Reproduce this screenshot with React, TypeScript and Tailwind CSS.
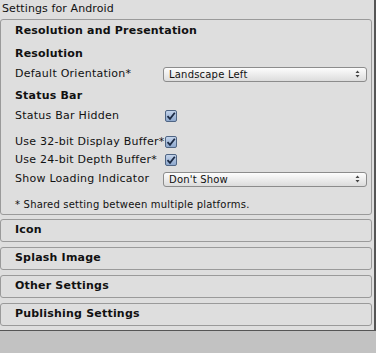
import React from 'react';

const font = { fontFamily: '"DejaVu Sans", Verdana, sans-serif' };

function Checkbox() {
  return (
    <span className="relative z-10 flex h-[12px] w-[12px] items-center justify-center rounded-[2px] border border-[#4f6584] bg-gradient-to-b from-[#c3d3ea] to-[#8ea8cd]">
      <svg width="10" height="10" viewBox="0 0 10 10">
        <path d="M1.5 5.2 L4 7.8 L8.8 1.8" fill="none" stroke="#1b2a44" strokeWidth="1.8" />
      </svg>
    </span>
  );
}

function Popup({ value }: { value: string }) {
  return (
    <div className="flex h-[15px] w-[204px] items-center justify-between rounded-[3px] border border-[#8c8c8c] bg-gradient-to-b from-[#fdfdfd] to-[#dcdcdc] pl-[5px] pr-[6px] text-[10px] tracking-[0.2px] text-[#111]">
      <span>{value}</span>
      <svg width="5" height="8" viewBox="0 0 5 8">
        <path d="M2.5 0.5 L4.5 3 L0.5 3 Z M2.5 7.5 L4.5 5 L0.5 5 Z" fill="#444" />
      </svg>
    </div>
  );
}

function Row({ label, children, className = '' }: { label: string; children?: React.ReactNode; className?: string }) {
  return (
    <div className={`flex h-[18px] items-center ${className}`}>
      <span className="w-[148px] shrink-0 whitespace-nowrap tracking-[0.25px]">{label}</span>
      {children}
    </div>
  );
}

function Foldout({ title }: { title: string }) {
  return (
    <div className="mt-[5px] flex h-[23px] items-center rounded-[3px] border border-[#9a9a9a] pl-[14px] font-bold tracking-[0.2px] first:mt-[4px]">
      {title}
    </div>
  );
}

export default function App() {
  return (
    <div className="h-[353px] w-[376px] overflow-hidden bg-[#c2c2c2] text-[11px] text-[#111]" style={font}>
      <div className="h-[331px] border-b border-r-2 border-[#555] bg-[#dedede] pr-[2px]">
        <div className="flex h-[19px] items-center pl-[2px] text-[11px] tracking-[0.1px]">Settings for Android</div>

        {/* Resolution and Presentation */}
        <div className="h-[196px] rounded-[3px] border border-[#9a9a9a] pl-[14px]">
          <div className="flex h-[23px] items-center font-bold tracking-[0.2px]">Resolution and Presentation</div>
          <div className="mt-[2px] flex h-[18px] items-center font-bold tracking-[0.2px]">Resolution</div>
          <Row label="Default Orientation*" className="mt-[2px]">
            <Popup value="Landscape Left" />
          </Row>
          <div className="mt-[4px] flex h-[18px] items-center font-bold tracking-[0.2px]">Status Bar</div>
          <Row label="Status Bar Hidden" className="mt-[2px]">
            <span className="ml-[2px]"><Checkbox /></span>
          </Row>
          <Row label="Use 32-bit Display Buffer*" className="mt-[8px]">
            <span className="ml-[2px]"><Checkbox /></span>
          </Row>
          <Row label="Use 24-bit Depth Buffer*">
            <span className="ml-[2px]"><Checkbox /></span>
          </Row>
          <Row label="Show Loading Indicator" className="mt-[1px]">
            <Popup value="Don't Show" />
          </Row>
          <div className="mt-[7px] flex h-[18px] items-center text-[10px] tracking-[0.2px]">* Shared setting between multiple platforms.</div>
        </div>

        <div>
          <Foldout title="Icon" />
          <Foldout title="Splash Image" />
          <Foldout title="Other Settings" />
          <Foldout title="Publishing Settings" />
        </div>
      </div>
    </div>
  );
}
